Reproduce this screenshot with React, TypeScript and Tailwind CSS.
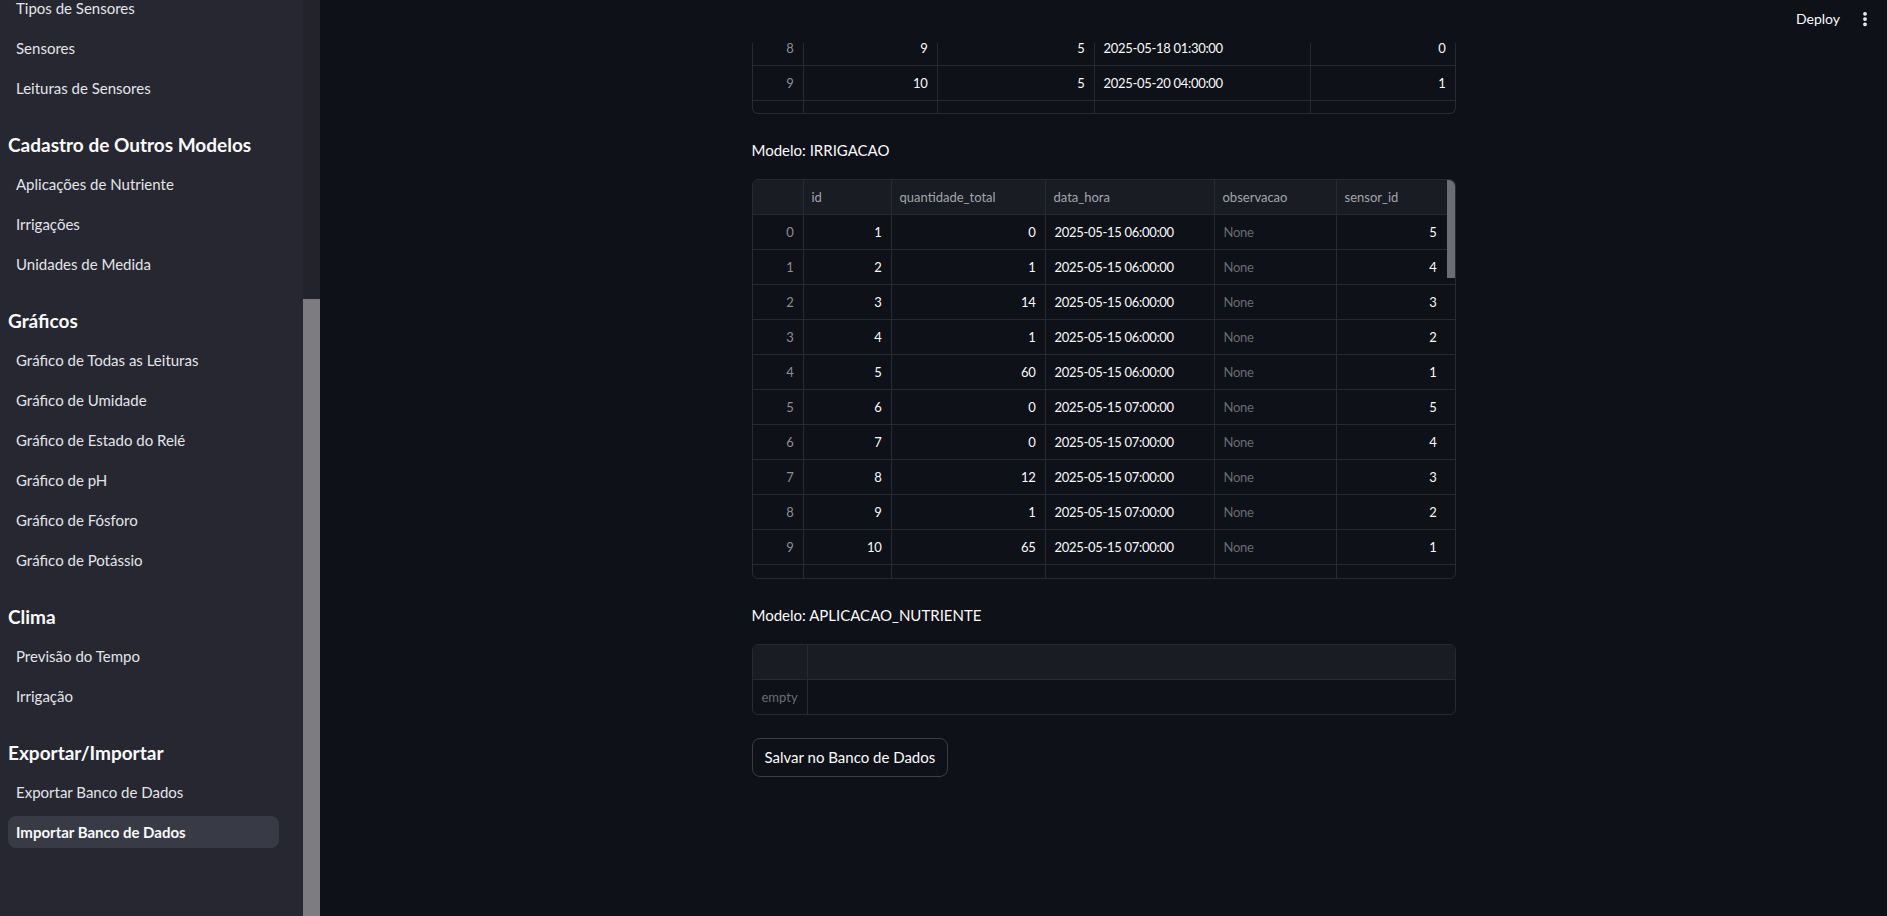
import { EllipsisVertical } from "lucide-react";

type Col = { name: string; w: string; align?: "left" | "right"; dim?: boolean; pr?: string };

const navSections = [
  { title: "", items: ["Tipos de Sensores", "Sensores", "Leituras de Sensores"] },
  { title: "Cadastro de Outros Modelos", items: ["Aplicações de Nutriente", "Irrigações", "Unidades de Medida"] },
  {
    title: "Gráficos",
    items: [
      "Gráfico de Todas as Leituras",
      "Gráfico de Umidade",
      "Gráfico de Estado do Relé",
      "Gráfico de pH",
      "Gráfico de Fósforo",
      "Gráfico de Potássio",
    ],
  },
  { title: "Clima", items: ["Previsão do Tempo", "Irrigação"] },
  { title: "Exportar/Importar", items: ["Exportar Banco de Dados", "Importar Banco de Dados"] },
];

const ACTIVE = "Importar Banco de Dados";

const topCols: Col[] = [
  { name: "", w: "w-[51px]", align: "right", dim: true },
  { name: "id", w: "w-[134px]", align: "right" },
  { name: "tipo", w: "w-[157px]", align: "right" },
  { name: "data_hora", w: "w-[216px]" },
  { name: "valor", w: "flex-1", align: "right" },
];

const topRows = [
  ["8", "9", "5", "2025-05-18 01:30:00", "0"],
  ["9", "10", "5", "2025-05-20 04:00:00", "1"],
];

const irrCols: Col[] = [
  { name: "", w: "w-[51px]", align: "right", dim: true },
  { name: "id", w: "w-[88px]", align: "right" },
  { name: "quantidade_total", w: "w-[154px]", align: "right" },
  { name: "data_hora", w: "w-[169px]" },
  { name: "observacao", w: "w-[122px]" },
  { name: "sensor_id", w: "flex-1", align: "right", pr: "pr-[18px]" },
];

const irrRows = [
  ["0", "1", "0", "2025-05-15 06:00:00", "None", "5"],
  ["1", "2", "1", "2025-05-15 06:00:00", "None", "4"],
  ["2", "3", "14", "2025-05-15 06:00:00", "None", "3"],
  ["3", "4", "1", "2025-05-15 06:00:00", "None", "2"],
  ["4", "5", "60", "2025-05-15 06:00:00", "None", "1"],
  ["5", "6", "0", "2025-05-15 07:00:00", "None", "5"],
  ["6", "7", "0", "2025-05-15 07:00:00", "None", "4"],
  ["7", "8", "12", "2025-05-15 07:00:00", "None", "3"],
  ["8", "9", "1", "2025-05-15 07:00:00", "None", "2"],
  ["9", "10", "65", "2025-05-15 07:00:00", "None", "1"],
  ["", "", "", "", "", ""],
];

function Cell({ col, value, last }: { col: Col; value: string; last: boolean }) {
  const color = col.dim ? "text-[#8d8f95]" : value === "None" ? "text-[#6a6c72]" : "text-[#fafafa]";
  return (
    <div
      className={`${col.w} flex h-full items-center pl-[9px] ${col.pr ?? "pr-[9px]"} pt-[2px] tracking-[-0.3px] ${
        col.align === "right" ? "justify-end" : "justify-start"
      } ${last ? "" : "border-r border-[#282a31]"} ${color}`}
    >
      {value}
    </div>
  );
}

function Row({ cols, values, className = "" }: { cols: Col[]; values: string[]; className?: string }) {
  return (
    <div className={`flex h-[35px] shrink-0 border-b border-[#282a31] ${className}`}>
      {cols.map((c, i) => (
        <Cell key={i} col={c} value={values[i] ?? ""} last={i === cols.length - 1} />
      ))}
    </div>
  );
}

function HeaderRow({ cols }: { cols: Col[] }) {
  return (
    <div className="flex h-[35px] shrink-0 border-b border-[#282a31] bg-[#1a1c24]">
      {cols.map((c, i) => (
        <div
          key={i}
          className={`${c.w} flex h-full items-center px-2 pt-[2px] text-[#a3a5ab] ${
            i === cols.length - 1 ? "" : "border-r border-[#282a31]"
          }`}
        >
          {c.name}
        </div>
      ))}
    </div>
  );
}

export default function App() {
  return (
    <div className="flex h-[916px] w-full overflow-hidden bg-[#0e1117] font-['Lato',sans-serif] text-[#fafafa]">
      {/* sidebar */}
      <aside className="flex w-[320px] shrink-0 bg-[#262730]">
        <nav className="flex-1 overflow-hidden pl-2 pr-6">
          <div className="-mt-2 flex flex-col gap-6">
            {navSections.map((s, si) => (
              <div key={si} className="flex flex-col gap-2">
                {s.title && (
                  <div className="flex h-8 items-center pt-[2px] text-[19px] font-bold text-[#fafafa]">{s.title}</div>
                )}
                {s.items.map((it) => (
                  <div
                    key={it}
                    className={`flex h-8 items-center rounded-lg px-2 text-[15px] ${
                      it === ACTIVE ? "bg-[#383a46] font-bold text-[#fafafa]" : "text-[#e3e4e8]"
                    }`}
                  >
                    {it}
                  </div>
                ))}
              </div>
            ))}
          </div>
        </nav>
        <div className="flex w-[17px] flex-col bg-[#22232b]">
          <div className="mt-[299px] flex-1 bg-[#7c7c81]" />
        </div>
      </aside>

      {/* main */}
      <main className="relative flex-1 overflow-hidden">
        <header className="absolute inset-x-0 top-0 z-10 flex h-[43px] items-start justify-end bg-[#0e1117] pr-[13px] pt-[9px]">
          <span className="mr-[16px] text-[14px] leading-[20px] text-[#fafafa]">Deploy</span>
          <EllipsisVertical size={18} strokeWidth={3} className="mt-[1px] text-[#fafafa]" />
        </header>

        <div className="mx-auto w-[704px] pt-[31px] text-[13px]">
          {/* tail of previous table */}
          <div className="flex h-[83px] flex-col overflow-hidden rounded-b-md border-x border-b border-[#282a31]">
            {topRows.map((r, i) => (
              <Row key={i} cols={topCols} values={r} />
            ))}
            <Row cols={topCols} values={["", "", "", "", ""]} className="border-b-0" />
          </div>

          <p className="mt-[24px] h-6 text-[15px] leading-6">Modelo: IRRIGACAO</p>

          <div className="relative mt-[17px] flex h-[400px] flex-col overflow-hidden rounded-md border border-[#282a31]">
            <HeaderRow cols={irrCols} />
            {irrRows.map((r, i) => (
              <Row key={i} cols={irrCols} values={r} />
            ))}
            <div className="absolute right-0 top-0 h-[98px] w-[8px] rounded-tr-md bg-[#6c6d72]" />
          </div>

          <p className="mt-6 h-6 text-[15px] leading-6">Modelo: APLICACAO_NUTRIENTE</p>

          <div className="mt-[17px] flex flex-col overflow-hidden rounded-md border border-[#282a31]">
            <div className="flex h-[35px] border-b border-[#282a31] bg-[#1a1c24]">
              <div className="w-[55px] border-r border-[#282a31]" />
              <div className="flex-1" />
            </div>
            <div className="flex h-[34px]">
              <div className="flex w-[55px] items-center border-r border-[#282a31] px-[9px] pt-[2px] text-[#6a6c72]">
                empty
              </div>
              <div className="flex-1" />
            </div>
          </div>

          <button className="mt-[23px] h-[39px] rounded-lg border border-[#3b3d44] bg-[#0e1117] px-3 text-[15px] text-[#fafafa]">
            Salvar no Banco de Dados
          </button>
        </div>
      </main>
    </div>
  );
}
